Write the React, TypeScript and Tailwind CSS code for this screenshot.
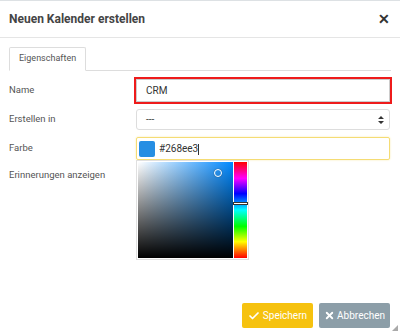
import { Check, X } from 'lucide-react';

export default function App() {
  return (
    <div className="w-[400px] h-[333px] bg-white border-t border-[#dde1e4] flex flex-col font-['Roboto',sans-serif] text-[#555] relative overflow-hidden">
      {/* Header */}
      <div className="h-[37px] flex items-center justify-between pl-[9px] pr-[10px] border-b border-[#e5e5e5]">
        <h1 className="text-[12px] font-bold text-[#444]">Neuen Kalender erstellen</h1>
        <span className="text-[14px] font-bold text-[#333] leading-none">✕</span>
      </div>

      <div className="px-[9px] pt-[9px]">
        {/* Tabs */}
        <div className="flex border-b border-[#ddd]">
          <div className="h-[24px] px-[9px] flex items-center text-[9px] text-[#555] border border-[#ddd] border-b-white -mb-px rounded-t-[2px] bg-white">
            Eigenschaften
          </div>
        </div>

        {/* Form */}
        <div className="grid grid-cols-[127px_1fr] gap-y-[7px] pt-[8px] text-[9.5px]">
          <label className="flex items-center h-[23px]">Name</label>
          <div className="pr-[1px]">
            <div className="h-[23px] flex items-center px-[9px] text-[10px] text-[#333] border border-[#ccc] rounded-none outline-2 outline-[#ee1b1b]">
              CRM
            </div>
          </div>

          <label className="flex items-center h-[21px]">Erstellen in</label>
          <div className="h-[21px] flex items-center justify-between pl-[9px] pr-[5px] border border-[#ddd] rounded-[3px] mr-[1px]">
            <span className="text-[#444] text-[10px]">---</span>
            <svg width="6" height="8" viewBox="0 0 6 8">
              <path d="M3 0 L6 3 L0 3 Z M0 5 L6 5 L3 8 Z" fill="#333" />
            </svg>
          </div>

          <label className="flex items-center h-[23px]">Farbe</label>
          <div className="mr-[1px]">
            <div className="h-[23px] flex items-center gap-[4px] pl-[2px] text-[10px] border border-[#f5dc74] rounded-[2px] shadow-[0_0_2px_#f8e8a4]">
              <div className="w-[16px] h-[16px] bg-[#268ee3] rounded-[2px]" />
              <span className="text-[#333]">#268ee3<span className="inline-block w-px h-[11px] bg-[#333] align-middle" /></span>
            </div>
            {/* Picker */}
            <div className="w-[113px] h-[100px] border border-[#e0e0e0] bg-white flex p-px gap-px">
              <div className="relative flex-1 h-full bg-[linear-gradient(to_top,#000,transparent),linear-gradient(to_right,#fff,#0088ff)]">
                <div className="absolute left-[76px] top-[7px] w-[8px] h-[8px] rounded-full border-[1.5px] border-white shadow-[0_0_1px_#333]" />
              </div>
              <div className="relative w-[13px] h-full bg-[linear-gradient(to_bottom,#f00,#f0f_17%,#00f_33%,#0ff_50%,#0f0_67%,#ff0_83%,#f00)]">
                <div className="absolute -left-px -right-px top-[40px] h-[3px] border border-[#333] bg-white" />
              </div>
            </div>
          </div>

          <label className="flex items-start h-[20px] -mt-[100px] pt-[1px] col-start-1 row-start-4">Erinnerungen anzeigen</label>
        </div>
      </div>

      {/* Footer */}
      <div className="mt-auto flex justify-end gap-[6px] pr-[10px] pb-[5px]">
        <button className="h-[25px] px-[6px] flex items-center gap-[3px] bg-[#f6c20f] text-white text-[10px] rounded-[2px]">
          <Check size={12} strokeWidth={3.5} />
          Speichern
        </button>
        <button className="h-[25px] px-[5px] flex items-center gap-[2px] bg-[#8c9ea8] text-white text-[10px] rounded-[2px]">
          <X size={11} strokeWidth={4} />
          Abbrechen
        </button>
      </div>
      <svg className="absolute right-[2px] bottom-[2px]" width="6" height="6" viewBox="0 0 6 6">
        <path d="M6 0 L6 6 L0 6 Z" fill="#aaa" />
      </svg>
    </div>
  );
}
